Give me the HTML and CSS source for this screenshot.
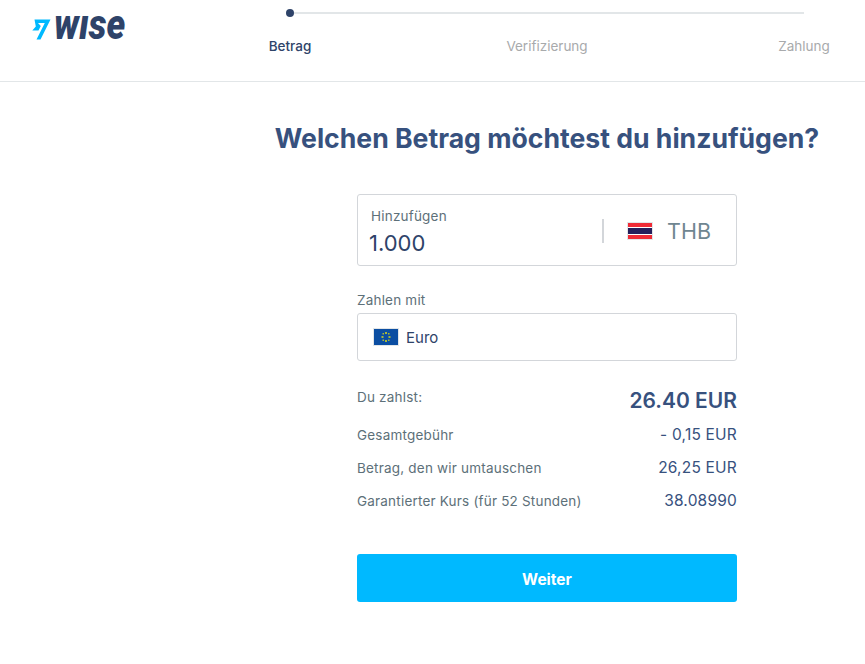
FILE: index.html
```html
<!DOCTYPE html>
<html lang="de">
<head>
    <meta charset="UTF-8">
    <meta name="viewport" content="width=device-width, initial-scale=1.0">
    <title>Betrag hinzufügen</title>
    <link rel="stylesheet" href="styles.css">
</head>
<body>
    <header class="topbar">
        <div class="logo">
            <svg class="logo-mark" width="19" height="21" viewBox="0 0 19 21">
                <path d="M2.500 0.500 L18.500 0.500 L8.500 20.500 L4.500 20.500 L12.800 4 L6 4 L8.800 7 L6.500 11.500 L0.300 11.500 L3.800 7.500 Z" fill="#00b9ff"/>
            </svg>
            <span class="logo-text">wıse</span>
        </div>
        <div class="stepper">
            <div class="track">
                <span class="dot"></span>
                <span class="line"></span>
            </div>
            <div class="steps">
                <span class="step active"><span>Betrag</span></span>
                <span class="step"><span>Verifizierung</span></span>
                <span class="step"><span>Zahlung</span></span>
            </div>
        </div>
    </header>

    <main class="content">
        <h1>Welchen Betrag möchtest du hinzufügen?</h1>
        <form class="form">
            <div class="amount-box">
                <div class="amount">
                    <label>Hinzufügen</label>
                    <div class="amount-value">1.000</div>
                </div>
                <div class="currency">
                    <svg class="flag" width="26" height="18" viewBox="0 0 26 18">
                        <rect x="0.500" y="0.500" width="25" height="17" fill="#fff" stroke="#e2e6e8"/>
                        <rect x="1" y="1" width="24" height="4" fill="#ef2b36"/>
                        <rect x="1" y="6" width="24" height="6" fill="#241f5c"/>
                        <rect x="1" y="13" width="24" height="4" fill="#ef2b36"/>
                    </svg>
                    <span class="code">THB</span>
                </div>
            </div>

            <label class="field-label">Zahlen mit</label>
            <div class="select-box">
                <svg class="flag" width="26" height="18" viewBox="0 0 26 18">
                    <rect x="0.500" y="0.500" width="25" height="17" fill="#0b4ea2" stroke="#e2e6e8"/>
                    <g fill="#a8b83a">
                        <rect x="12" y="4" width="2" height="2"/>
                        <rect x="12" y="12" width="2" height="2"/>
                        <rect x="8.500" y="8" width="2" height="2"/>
                        <rect x="15.500" y="8" width="2" height="2"/>
                        <rect x="9.500" y="5" width="1.500" height="1.500"/>
                        <rect x="15" y="5" width="1.500" height="1.500"/>
                        <rect x="9.500" y="11.500" width="1.500" height="1.500"/>
                        <rect x="15" y="11.500" width="1.500" height="1.500"/>
                    </g>
                </svg>
                <span>Euro</span>
            </div>

            <div class="summary">
                <div class="row total">
                    <span class="key">Du zahlst:</span>
                    <span class="val">26.40 EUR</span>
                </div>
                <div class="row">
                    <span class="key">Gesamtgebühr</span>
                    <span class="val">- 0,15 EUR</span>
                </div>
                <div class="row">
                    <span class="key">Betrag, den wir umtauschen</span>
                    <span class="val">26,25 EUR</span>
                </div>
                <div class="row">
                    <span class="key">Garantierter Kurs (für 52 Stunden)</span>
                    <span class="val">38.08990</span>
                </div>
            </div>

            <button type="button" class="submit">Weiter</button>
        </form>
    </main>
</body>
</html>
```

FILE: styles.css
```css
* { box-sizing: border-box; }
body { margin: 0; font-family: Inter, "Noto Sans", Arial, sans-serif; color: #2e4369; background: #fff; overflow: hidden; }

.topbar { display: flex; height: 82px; padding-left: 32px; border-bottom: 1px solid #e2e6e8; }
.logo { display: flex; align-items: flex-start; width: 258px; padding-top: 7px; }
.logo-mark { margin-top: 12px; flex: none; }
.logo-text { margin-left: 3px; font-family: Roboto, sans-serif; font-size: 35.500px; line-height: 40px; font-weight: 900; font-style: italic; color: #2e4369; transform: scaleY(1.2); transform-origin: 0 33px; }

.stepper { width: 514px; padding-top: 9px; }
.track { display: flex; align-items: center; margin-left: -4px; height: 8px; }
.dot { width: 8px; height: 8px; border-radius: 50%; background: #2e4369; flex: none; }
.line { flex: 1; height: 2px; background: #e2e6e8; }
.steps { display: flex; justify-content: space-between; margin-top: 19px; font-size: 13.5px; line-height: 20px; color: #a8aaac; }
.step { width: 0; display: flex; justify-content: center; white-space: nowrap; }
.step.active { color: #2e4369; font-weight: 500; }

.content { width: 580px; margin-left: 257px; display: flex; flex-direction: column; align-items: center; }
h1 { margin: 38px 0 0; font-size: 26.6px; line-height: 36px; font-weight: 700; color: #37517e; white-space: nowrap; }

.form { width: 380px; margin-top: 38px; }
.amount-box { display: flex; justify-content: space-between; height: 72px; border: 1px solid #d3d6da; border-radius: 3px; padding: 11px 25px 0 13px; }
.amount label { display: block; font-size: 13.5px; line-height: 20px; letter-spacing: 0.2px; color: #5d7079; }
.amount-value { font-size: 22px; line-height: 34px; margin-left: -2px; color: #2e4369; }
.currency { display: flex; align-items: center; border-left: 2px solid #d3d6da; height: 24px; margin-top: 13px; padding-left: 23px; }
.code { margin-left: 14px; font-size: 21.5px; color: #6f8691; }
.flag { flex: none; }

.field-label { display: block; margin-top: 24px; font-size: 13.5px; line-height: 20px; letter-spacing: 0.2px; color: #5d7079; }
.select-box { display: flex; align-items: center; height: 48px; margin-top: 3px; border: 1px solid #d3d6da; border-radius: 3px; padding-left: 15px; font-size: 15px; }
.select-box span { margin-left: 7px; }

.summary { margin-top: 24px; }
.row { display: flex; justify-content: space-between; align-items: center; height: 33px; font-size: 13.5px; letter-spacing: 0.2px; color: #5d7079; }
.row .val { font-size: 15.500px; color: #37517e; }
.row.total { height: 33px; align-items: flex-start; line-height: 24px; }
.row.total .val { font-size: 21px; line-height: 32px; font-weight: 600; letter-spacing: 0; }

.submit { display: block; width: 100%; height: 48px; margin-top: 37px; padding-top: 3px; border: 0; border-radius: 3px; background: #00b9ff; color: #fff; font-family: inherit; font-size: 15.500px; font-weight: 700; }
```
